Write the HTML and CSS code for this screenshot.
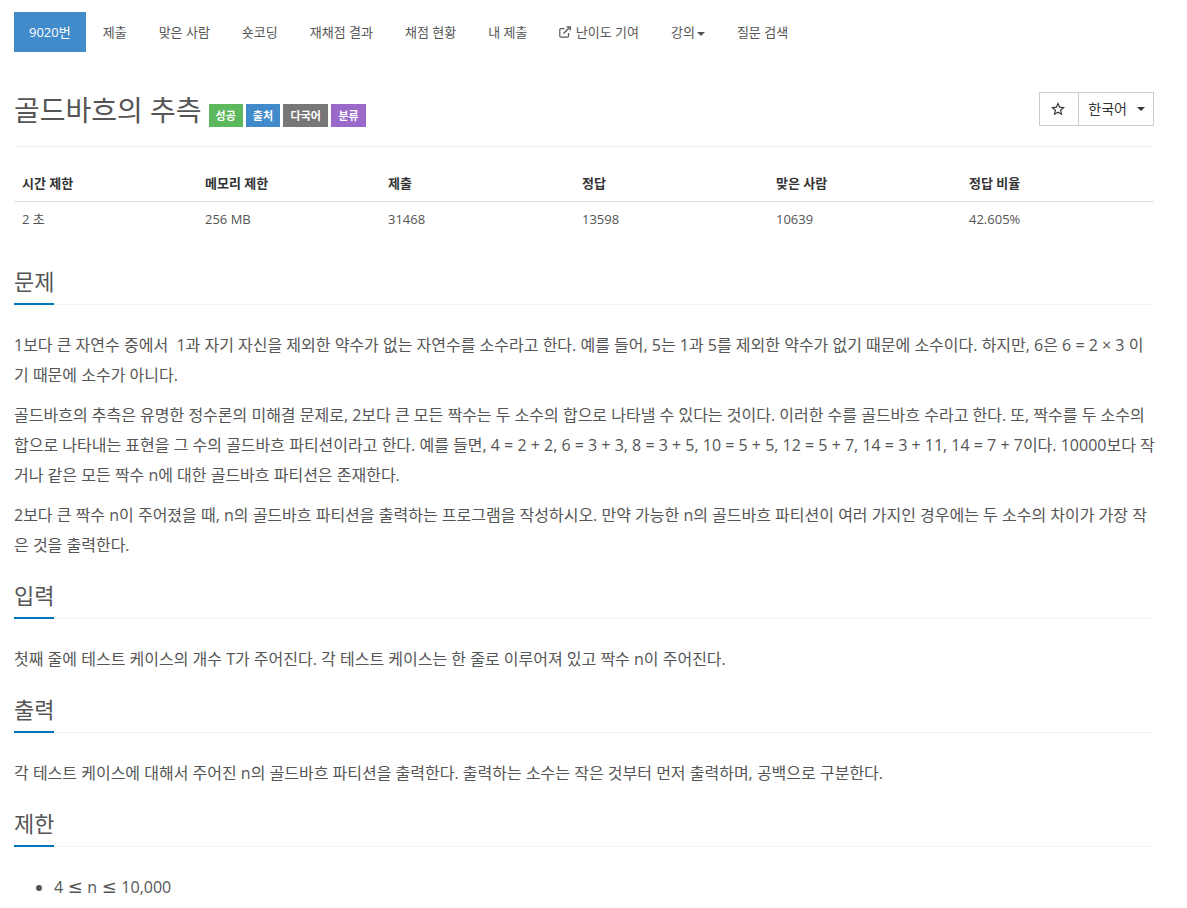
FILE: index.html
```html
<!DOCTYPE html>
<html lang="ko">
  <head>
    <meta charset="UTF-8" />
    <title>9020번: 골드바흐의 추측</title>
    <link rel="stylesheet" href="styles.css">
  </head>
  <body>
    <div class="container">
      <ul class="nav-pills">
        <li class="active"><a href="#">9020번</a></li>
        <li><a href="#">제출</a></li>
        <li><a href="#">맞은 사람</a></li>
        <li><a href="#">숏코딩</a></li>
        <li><a href="#">재채점 결과</a></li>
        <li><a href="#">채점 현황</a></li>
        <li><a href="#">내 제출</a></li>
        <li>
          <a href="#">
            <svg class="icon-external" viewBox="0 0 12 12" width="12" height="12" fill="none" stroke="#555" stroke-width="1.2">
              <path d="M9.5 7v3a1.2 1.2 0 0 1-1.2 1.2H2A1.2 1.2 0 0 1 .8 10V3.8A1.2 1.2 0 0 1 2 2.6h3.5" />
              <path d="M4.5 7.5 10.5 1.5" stroke-width="1.5" />
              <path d="M7.5 .8h3.8v3.8" stroke-width="1.3" />
            </svg>
            난이도 기여
          </a>
        </li>
        <li><a href="#">강의<span class="caret"></span></a></li>
        <li><a href="#">질문 검색</a></li>
      </ul>

      <div class="page-header">
        <h1>
          <span>골드바흐의 추측</span>
          <span class="label label-success">성공</span>
          <span class="label label-primary">출처</span>
          <span class="label label-default">다국어</span>
          <span class="label label-purple">분류</span>
        </h1>
        <div class="btn-group">
          <button class="btn btn-star" type="button">
            <svg viewBox="0 0 24 24" width="14" height="14" fill="none" stroke="#333" stroke-width="2" stroke-linejoin="miter">
              <path d="M12 2.6l2.8 6.3 6.8.7-5.1 4.6 1.5 6.7-6-3.5-6 3.5 1.5-6.7-5.1-4.6 6.8-.7z" />
            </svg>
          </button>
          <button class="btn btn-lang" type="button">한국어<span class="caret caret-lang"></span></button>
        </div>
      </div>

      <table class="problem-info">
        <thead>
          <tr>
            <th>시간 제한</th>
            <th>메모리 제한</th>
            <th>제출</th>
            <th>정답</th>
            <th>맞은 사람</th>
            <th>정답 비율</th>
          </tr>
        </thead>
        <tbody>
          <tr>
            <td>2 초</td>
            <td>256 MB</td>
            <td>31468</td>
            <td>13598</td>
            <td>10639</td>
            <td>42.605%</td>
          </tr>
        </tbody>
      </table>

      <section>
        <div class="headline"><h2>문제</h2></div>
        <p>1보다 큰 자연수 중에서 &nbsp;1과 자기 자신을 제외한 약수가 없는 자연수를 소수라고 한다. 예를 들어, 5는 1과 5를 제외한 약수가 없기 때문에 소수이다. 하지만, 6은 6 = 2 × 3 이기 때문에 소수가 아니다.</p>
        <p>골드바흐의 추측은 유명한 정수론의 미해결 문제로, 2보다 큰 모든 짝수는 두 소수의 합으로 나타낼 수 있다는 것이다. 이러한 수를 골드바흐 수라고 한다. 또, 짝수를 두 소수의 합으로 나타내는 표현을 그 수의 골드바흐 파티션이라고 한다. 예를 들면, 4 = 2 + 2, 6 = 3 + 3, 8 = 3 + 5, 10 = 5 + 5, 12 = 5 + 7, 14 = 3 + 11, 14 = 7 + 7이다. 10000보다 작거나 같은 모든 짝수 n에 대한 골드바흐 파티션은 존재한다.</p>
        <p>2보다 큰 짝수 n이 주어졌을 때, n의 골드바흐 파티션을 출력하는 프로그램을 작성하시오. 만약 가능한 n의 골드바흐 파티션이 여러 가지인 경우에는 두 소수의 차이가 가장 작은 것을 출력한다.</p>
      </section>

      <section>
        <div class="headline"><h2>입력</h2></div>
        <p>첫째 줄에 테스트 케이스의 개수 T가 주어진다. 각 테스트 케이스는 한 줄로 이루어져 있고 짝수 n이 주어진다.</p>
      </section>

      <section>
        <div class="headline"><h2>출력</h2></div>
        <p>각 테스트 케이스에 대해서 주어진 n의 골드바흐 파티션을 출력한다. 출력하는 소수는 작은 것부터 먼저 출력하며, 공백으로 구분한다.</p>
      </section>

      <section>
        <div class="headline"><h2>제한</h2></div>
        <ul class="limit-list">
          <li>4 <span class="rel">≤</span> n <span class="rel">≤</span> 10,000</li>
        </ul>
      </section>
    </div>
  </body>
</html>
```

FILE: styles.css
```css
* {
  box-sizing: border-box;
}

html,
body {
  height: 100%;
  overflow: hidden;
}

body {
  margin: 0;
  background-color: #fff;
  color: #555;
  font-family: "Open Sans", "Noto Sans CJK KR", sans-serif;
  font-size: 13px;
}

a {
  color: #555;
  text-decoration: none;
}

.container {
  width: 1140px;
  margin-left: 14px;
}

/* top nav */
.nav-pills {
  display: flex;
  list-style: none;
  margin: 0;
  padding: 12px 0 0;
}
.nav-pills li + li {
  margin-left: 2px;
}
.nav-pills a {
  display: block;
  height: 40px;
  padding: 0 15px;
  line-height: 40px;
  font-size: 13px;
  white-space: nowrap;
}
.nav-pills .active a {
  background-color: #428bca;
  color: #fff;
}
.icon-external {
  vertical-align: -1px;
  margin-right: 1px;
}
.caret {
  display: inline-block;
  width: 0;
  height: 0;
  margin-left: 2px;
  vertical-align: middle;
  border-top: 4px solid #555;
  border-left: 4px solid transparent;
  border-right: 4px solid transparent;
}
.caret-lang {
  margin-top: 2px;
  margin-left: 10px;
  border-top-color: #333;
}

/* title */
.page-header {
  display: flex;
  justify-content: space-between;
  align-items: flex-start;
  margin-top: 40px;
  height: 55px;
  border-bottom: 1px solid #eee;
}
.page-header h1 {
  display: flex;
  align-items: center;
  gap: 3px;
  margin: 0;
  font-size: 28px;
  font-weight: 400;
  line-height: 36px;
  color: #555;
}
.label {
  height: 23px;
  padding: 0 7px;
  margin-top: 11px;
  font-size: 11px;
  font-weight: 700;
  line-height: 23px;
  color: #fff;
}
.label-success {
  margin-left: 4px;
  background-color: #5cb85c;
}
.label-primary {
  background-color: #428bca;
}
.label-default {
  padding: 0 7.5px;
  background-color: #777;
}
.label-purple {
  background-color: #9b69c9;
}
.btn-group {
  display: flex;
}
.btn {
  display: flex;
  align-items: center;
  height: 34px;
  padding: 0 8px 0 9px;
  border: 1px solid #ccc;
  background-color: #fff;
  color: #333;
  font-family: inherit;
  font-size: 14px;
}
.btn-star {
  width: 40px;
  padding: 0 10px 0 8px;
  justify-content: center;
}
.btn + .btn {
  margin-left: -1px;
}
.btn-lang {
  padding-bottom: 3px;
}

/* info table */
.problem-info {
  width: 100%;
  margin-top: 17px;
  border-collapse: collapse;
  color: #333;
  font-size: 13px;
}
.problem-info th {
  height: 37px;
  padding: 0 8px;
  text-align: left;
  font-weight: 700;
  border-bottom: 1px solid #ddd;
}
.problem-info td {
  height: 35px;
  padding: 0 8px;
  color: #555;
}
.problem-info th:nth-child(1),
.problem-info th:nth-child(2) {
  width: 183px;
}
.problem-info th:nth-child(3),
.problem-info th:nth-child(4) {
  width: 194px;
}
.problem-info th:nth-child(5) {
  width: 193px;
}

/* sections */
.headline {
  height: 44px;
  margin-top: 15px;
  border-bottom: 1px dotted #e4e9f0;
}
section:first-of-type .headline {
  margin-top: 25px;
}
.headline h2 {
  display: inline-block;
  height: 44px;
  margin: 0;
  padding-top: 4px;
  border-bottom: 2px solid #0076c0;
  font-size: 22px;
  font-weight: 400;
  line-height: 32px;
  color: #555;
}
section p {
  margin: 0 -3px 10px 0;
  font-size: 16px;
  line-height: 30px;
  color: #555;
}
.headline + p {
  margin-top: 25px;
}
.limit-list {
  margin: 25px 0 0;
  padding-left: 40px;
  font-size: 16px;
  line-height: 30px;
}
.rel {
  margin: 0 .4px;
  font-family: "DejaVu Sans", sans-serif;
  font-size: 18px;
}
```
